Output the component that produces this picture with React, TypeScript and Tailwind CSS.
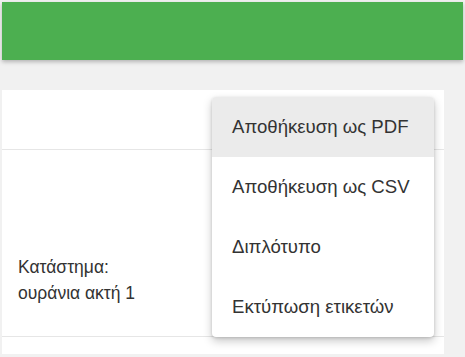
const items = [
  "Αποθήκευση ως PDF",
  "Αποθήκευση ως CSV",
  "Διπλότυπο",
  "Εκτύπωση ετικετών",
];

export default function App() {
  return (
    <div
      className="relative h-[357px] w-[465px] overflow-hidden bg-[#f1f1f1] px-[2px] pt-[2px] text-[#333]"
      style={{ fontFamily: '"Liberation Sans", Arial, sans-serif' }}
    >
      <div className="relative z-10 h-[58px] bg-[#4caf50] shadow-[0_2px_4px_rgba(0,0,0,0.25)]" />
      <div className="mt-[30px] mr-[19px] bg-white">
        <div className="h-[60px] border-b border-[#e6e6e6]" />
        <div className="flex h-[187px] flex-col justify-end border-b border-[#e6e6e6] px-4 pb-[30px] text-[17.5px] leading-[26px] text-[#333]">
          <div>Κατάστημα:</div>
          <div>ουράνια ακτή 1</div>
        </div>
        <div className="h-[17px]" />
      </div>

      <div className="absolute left-[212px] top-[97px] z-20 w-[222px] overflow-hidden rounded-[4px] bg-white shadow-[0_4px_10px_rgba(0,0,0,0.22),0_1px_3px_rgba(0,0,0,0.15)]">
        {items.map((t, i) => (
          <div
            key={t}
            className={`flex h-[60px] items-center px-5 text-[18.6px] text-[#333] ${
              i === 0 ? "bg-[#ebebeb]" : ""
            }`}
          >
            {t}
          </div>
        ))}
      </div>
    </div>
  );
}
